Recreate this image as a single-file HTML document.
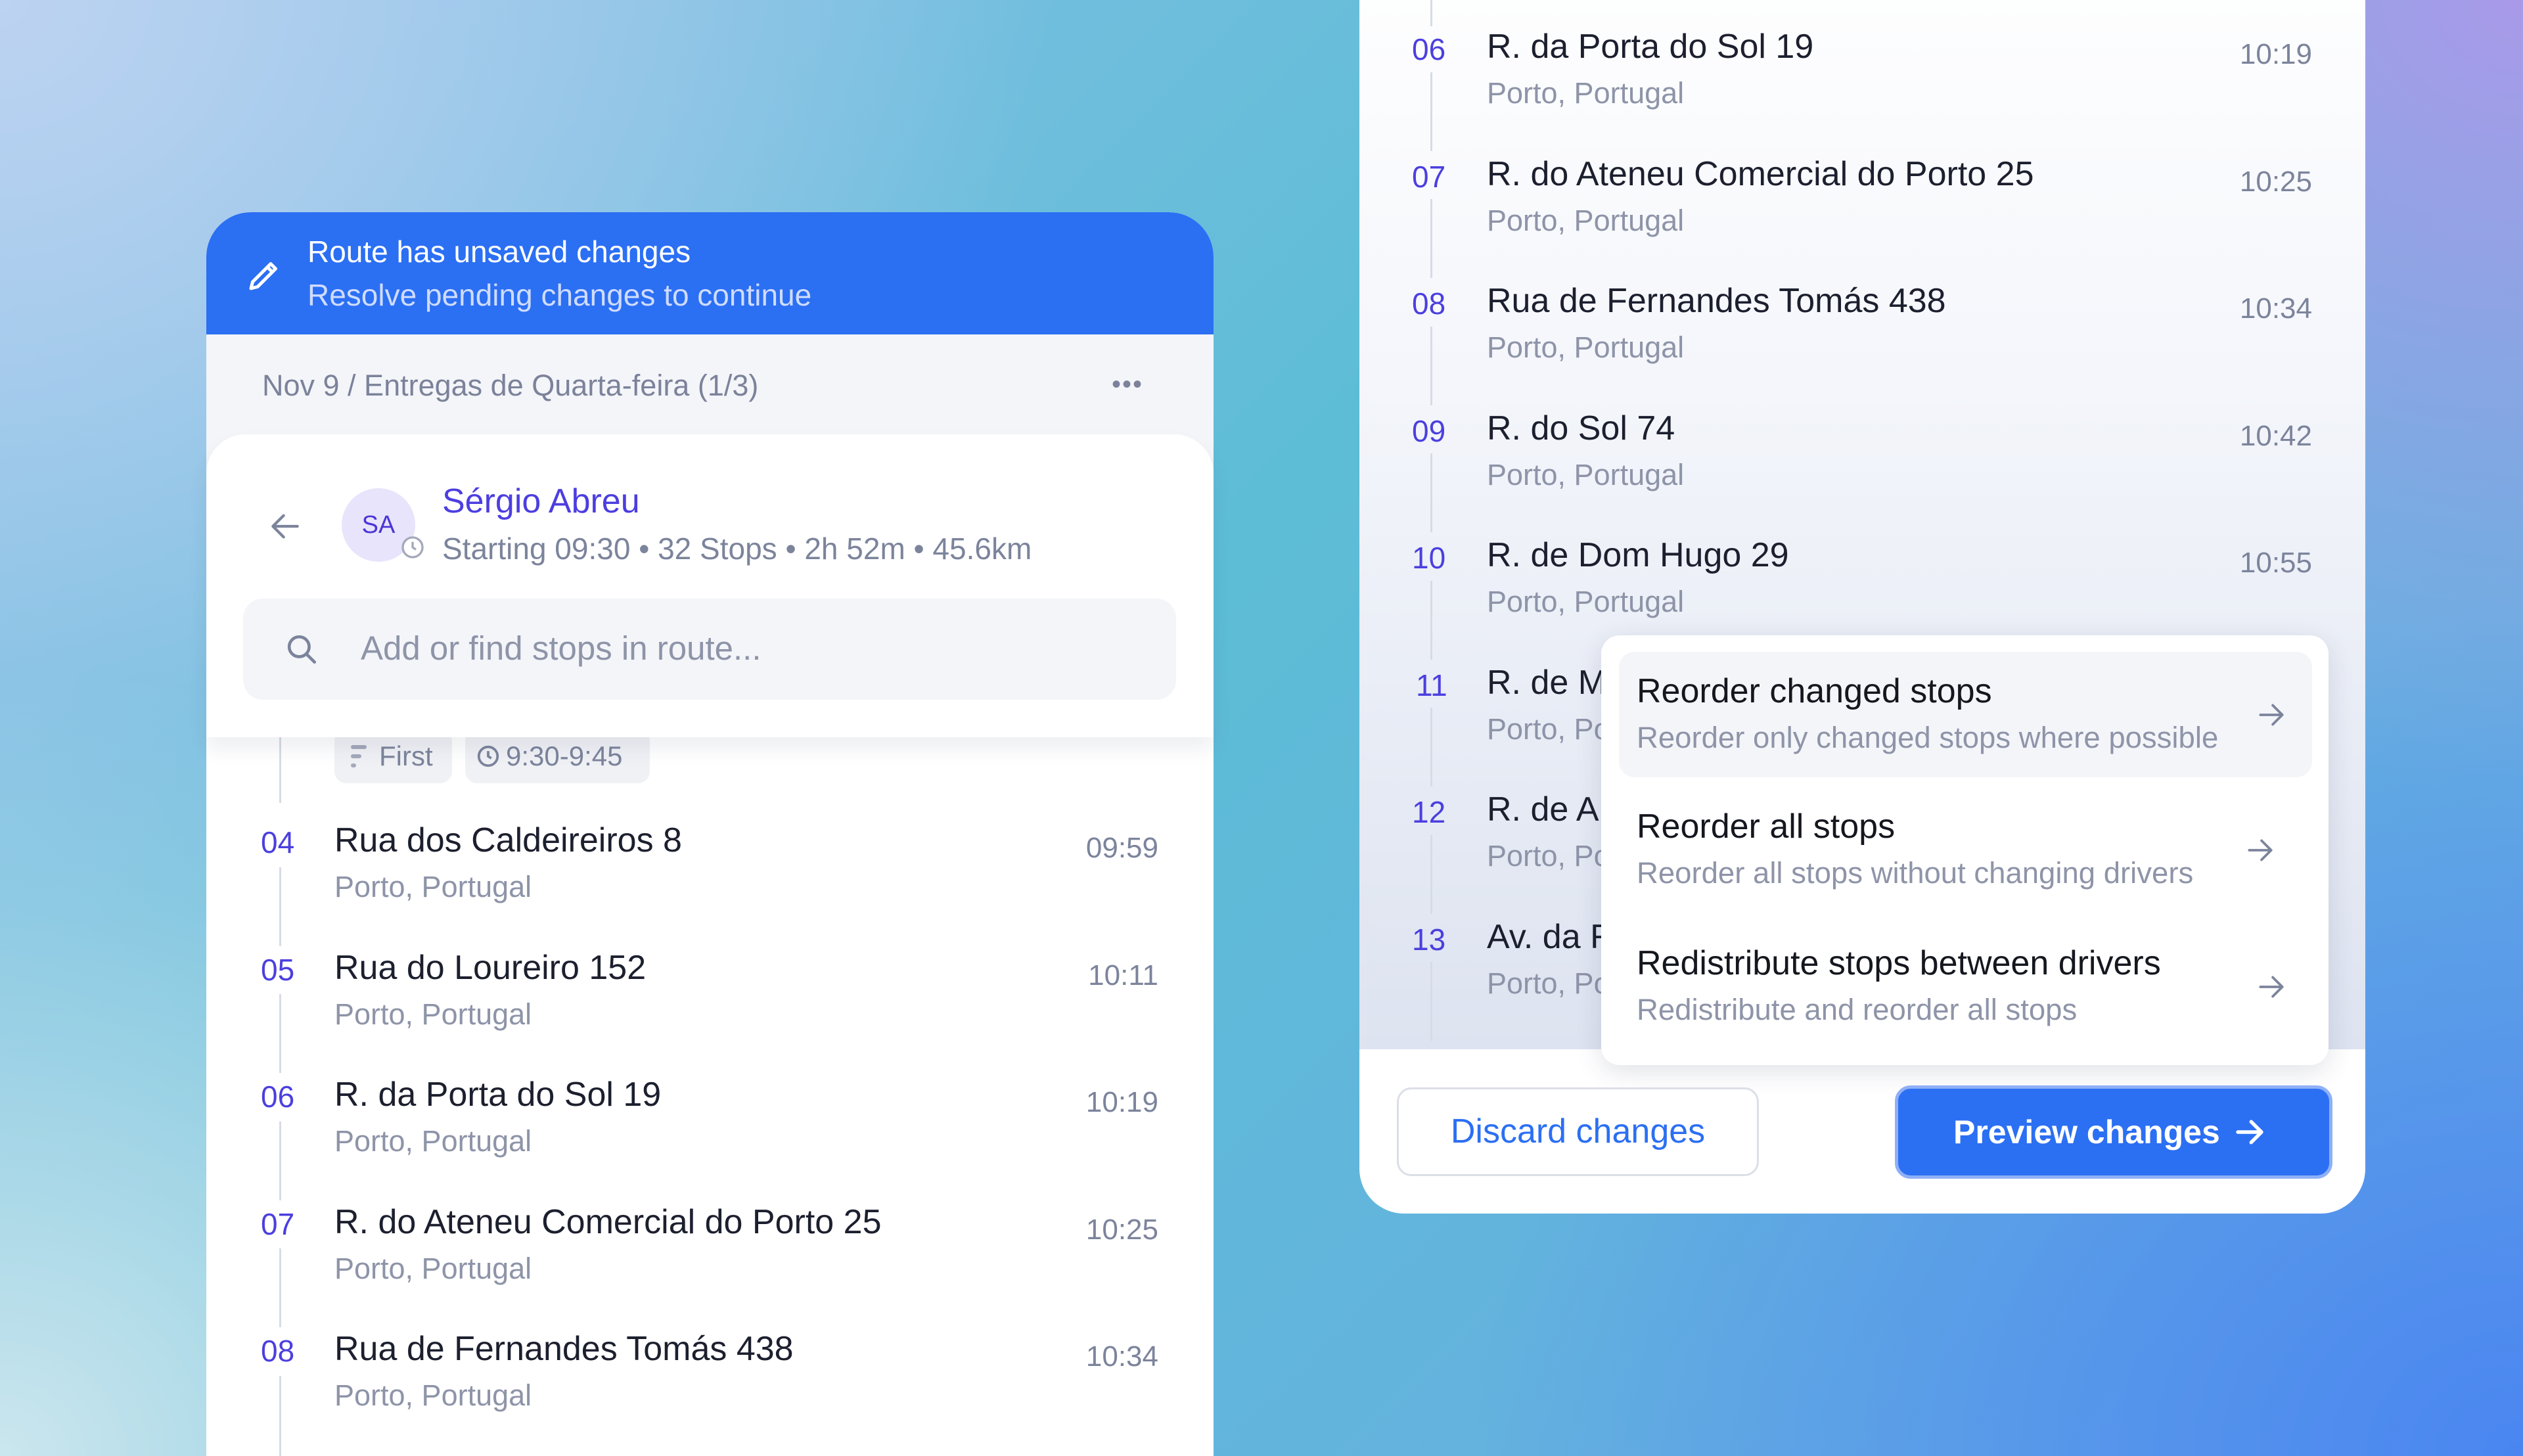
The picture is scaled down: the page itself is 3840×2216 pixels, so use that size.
<!DOCTYPE html>
<html style="overflow:hidden;width:3840px;height:2216px"><head><meta charset="utf-8"><style>
*{margin:0;padding:0;box-sizing:border-box}
body{width:3840px;height:2216px;overflow:hidden;position:relative;font-family:"Liberation Sans",sans-serif;
background:
radial-gradient(ellipse 1500px 1200px at 3840px 0px,#a99ae9 0%,rgba(169,154,233,0) 100%),
radial-gradient(ellipse 1600px 1300px at 3840px 2216px,#4a86f0 0%,rgba(74,134,240,0) 100%),
radial-gradient(ellipse 1600px 1400px at 0px 0px,#bcd3f1 0%,rgba(188,211,241,0) 100%),
radial-gradient(ellipse 1400px 1200px at 0px 2216px,#cbe6ee 0%,rgba(203,230,238,0) 100%),
linear-gradient(135deg,#8dbfe8 0%,#5dbdd6 45%,#6aa8e6 100%);}
.a{position:absolute;white-space:nowrap}
.num{color:#4b3fdf;font-size:46px}
.tt{color:#1c1f2e;font-size:52px}
.sub{color:#8e94a8;font-size:45px}
.tm{color:#7c849c;font-size:44px;text-align:right}
.vl{position:absolute;width:3px;background:#d8dbe5}
</style></head><body>

<!-- LEFT PANEL -->
<div class="a" style="left:314px;top:323px;width:1533px;height:1893px;background:#fff;border-radius:68px 68px 0 0;overflow:hidden">
  <div class="a" style="left:0;top:0;width:1533px;height:186px;background:#2b6ff3"></div>
  <svg class="a" style="left:58px;top:66px" width="60" height="60" viewBox="0 0 24 24" fill="none" stroke="#fff" stroke-width="2" stroke-linejoin="round"><path d="M4 20l1-4L16 5l3 3L8 19z M14 7l3 3"/></svg>
  <div class="a" style="left:154px;top:34px;font-size:46px;color:#fff;line-height:52px">Route has unsaved changes</div>
  <div class="a" style="left:154px;top:100px;font-size:46px;color:#cfdcff;line-height:52px">Resolve pending changes to continue</div>
  <div class="a" style="left:0;top:186px;width:1533px;height:300px;background:#f4f5f9"></div>
  <div class="a" style="left:85px;top:238px;font-size:45px;color:#7b829a;line-height:52px">Nov 9 / Entregas de Quarta-feira (1/3)</div>
  <div class="a" style="left:1378px;top:240px;font-size:40px;color:#7b829a;letter-spacing:2px">•••</div>
</div>
<!-- white card -->
<div class="a" style="left:314px;top:661px;width:1533px;height:461px;background:#fff;border-radius:60px 60px 0 0;box-shadow:0 18px 30px rgba(40,50,90,0.08);z-index:2">
  <svg class="a" style="left:92px;top:112px" width="56" height="56" viewBox="0 0 24 24" fill="none" stroke="#7c849c" stroke-width="1.8" stroke-linecap="round" stroke-linejoin="round"><path d="M20 12H5M11 5l-7 7 7 7"/></svg>
  <div class="a" style="left:206px;top:82px;width:112px;height:112px;border-radius:56px;background:#e7e4fb;color:#4b36d4;font-size:38px;line-height:112px;text-align:center">SA</div>
  <svg class="a" style="left:294px;top:152px" width="40" height="40" viewBox="0 0 24 24" fill="#fff" stroke="#a4a9bb" stroke-width="2"><circle cx="12" cy="12" r="9"/><path d="M12 7v5l3 2" fill="none"/></svg>
  <div class="a" style="left:359px;top:72px;font-size:52px;color:#4c3ee0;line-height:60px">Sérgio Abreu</div>
  <div class="a" style="left:359px;top:147px;font-size:46px;color:#7c849c;line-height:54px">Starting 09:30 • 32 Stops • 2h 52m • 45.6km</div>
  <div class="a" style="left:56px;top:250px;width:1420px;height:154px;background:#f4f5f9;border-radius:30px"></div>
  <svg class="a" style="left:118px;top:300px" width="56" height="56" viewBox="0 0 24 24" fill="none" stroke="#7c849c" stroke-width="2" stroke-linecap="round"><circle cx="10" cy="10" r="6.5"/><path d="M15 15l5 5"/></svg>
  <div class="a" style="left:235px;top:296px;font-size:51px;color:#8e94a8;line-height:60px">Add or find stops in route...</div>
</div>
<!-- chips -->
<div class="a" style="left:509px;top:1110px;width:179px;height:82px;background:#f0f1f5;border-radius:18px;font-size:42px;color:#7c849c;line-height:82px;padding-left:68px">First</div>
<div class="a" style="left:534px;top:1134px;width:24px;height:6px;background:#a4a9bb;border-radius:3px"></div>
<div class="a" style="left:534px;top:1148px;width:16px;height:6px;background:#a4a9bb;border-radius:3px"></div>
<div class="a" style="left:534px;top:1162px;width:8px;height:6px;background:#a4a9bb;border-radius:3px"></div>
<div class="a" style="left:708px;top:1110px;width:281px;height:82px;background:#f0f1f5;border-radius:18px;font-size:42px;color:#7c849c;line-height:82px;padding-left:62px">9:30-9:45</div>
<svg class="a" style="left:724px;top:1132px" width="38" height="38" viewBox="0 0 24 24" fill="none" stroke="#7c849c" stroke-width="2.4"><circle cx="12" cy="12" r="9"/><path d="M12 7v5l3 2"/></svg>

<div class="vl" style="left:425px;top:1122px;height:100px"></div>
<div class="vl" style="left:425px;top:1320px;height:120px"></div>
<div class="vl" style="left:425px;top:1513px;height:120px"></div>
<div class="vl" style="left:425px;top:1707px;height:120px"></div>
<div class="vl" style="left:425px;top:1900px;height:120px"></div>
<div class="vl" style="left:425px;top:2094px;height:122px"></div>

<div class="a num" style="left:397px;top:1255px">04</div><div class="a tt" style="left:509px;top:1249px">Rua dos Caldeireiros 8</div><div class="a sub" style="left:509px;top:1324px">Porto, Portugal</div><div class="a tm" style="right:2077px;top:1266px">09:59</div>
<div class="a num" style="left:397px;top:1449px">05</div><div class="a tt" style="left:509px;top:1443px">Rua do Loureiro 152</div><div class="a sub" style="left:509px;top:1518px">Porto, Portugal</div><div class="a tm" style="right:2077px;top:1460px">10:11</div>
<div class="a num" style="left:397px;top:1642px">06</div><div class="a tt" style="left:509px;top:1636px">R. da Porta do Sol 19</div><div class="a sub" style="left:509px;top:1711px">Porto, Portugal</div><div class="a tm" style="right:2077px;top:1653px">10:19</div>
<div class="a num" style="left:397px;top:1836px">07</div><div class="a tt" style="left:509px;top:1830px">R. do Ateneu Comercial do Porto 25</div><div class="a sub" style="left:509px;top:1905px">Porto, Portugal</div><div class="a tm" style="right:2077px;top:1847px">10:25</div>
<div class="a num" style="left:397px;top:2029px">08</div><div class="a tt" style="left:509px;top:2023px">Rua de Fernandes Tomás 438</div><div class="a sub" style="left:509px;top:2098px">Porto, Portugal</div><div class="a tm" style="right:2077px;top:2040px">10:34</div>

<!-- RIGHT PANEL -->
<div class="a" style="left:2069px;top:-100px;width:1531px;height:1947px;background:#fff;border-radius:0 0 68px 68px;overflow:hidden">
  <div class="a" style="left:0;top:0;width:1531px;height:1697px;background:linear-gradient(180deg,#fff 0%,#f4f6fb 40%,#dde3f0 100%)"></div>
</div>
<div class="vl" style="left:2177px;top:0;height:40px"></div>
<div class="vl" style="left:2177px;top:110px;height:120px"></div>
<div class="vl" style="left:2177px;top:303px;height:120px"></div>
<div class="vl" style="left:2177px;top:497px;height:120px"></div>
<div class="vl" style="left:2177px;top:690px;height:120px"></div>
<div class="vl" style="left:2177px;top:884px;height:120px"></div>
<div class="vl" style="left:2177px;top:1077px;height:120px"></div>
<div class="vl" style="left:2177px;top:1271px;height:120px"></div>
<div class="vl" style="left:2177px;top:1464px;height:120px"></div>

<div class="a num" style="left:2149px;top:48px">06</div><div class="a tt" style="left:2263px;top:41px">R. da Porta do Sol 19</div><div class="a sub" style="left:2263px;top:116px">Porto, Portugal</div><div class="a tm" style="right:321px;top:58px">10:19</div>
<div class="a num" style="left:2149px;top:242px">07</div><div class="a tt" style="left:2263px;top:235px">R. do Ateneu Comercial do Porto 25</div><div class="a sub" style="left:2263px;top:310px">Porto, Portugal</div><div class="a tm" style="right:321px;top:252px">10:25</div>
<div class="a num" style="left:2149px;top:435px">08</div><div class="a tt" style="left:2263px;top:428px">Rua de Fernandes Tomás 438</div><div class="a sub" style="left:2263px;top:503px">Porto, Portugal</div><div class="a tm" style="right:321px;top:445px">10:34</div>
<div class="a num" style="left:2149px;top:629px">09</div><div class="a tt" style="left:2263px;top:622px">R. do Sol 74</div><div class="a sub" style="left:2263px;top:697px">Porto, Portugal</div><div class="a tm" style="right:321px;top:639px">10:42</div>
<div class="a num" style="left:2149px;top:822px">10</div><div class="a tt" style="left:2263px;top:815px">R. de Dom Hugo 29</div><div class="a sub" style="left:2263px;top:890px">Porto, Portugal</div><div class="a tm" style="right:321px;top:832px">10:55</div>
<div class="a num" style="left:2155px;top:1016px">11</div><div class="a tt" style="left:2263px;top:1009px">R. de M</div><div class="a sub" style="left:2263px;top:1084px">Porto, Po</div>
<div class="a num" style="left:2149px;top:1209px">12</div><div class="a tt" style="left:2263px;top:1202px">R. de Ar</div><div class="a sub" style="left:2263px;top:1277px">Porto, Po</div>
<div class="a num" style="left:2149px;top:1403px">13</div><div class="a tt" style="left:2263px;top:1396px">Av. da R</div><div class="a sub" style="left:2263px;top:1471px">Porto, Po</div>

<!-- popup -->
<div class="a" style="left:2437px;top:967px;width:1107px;height:654px;background:#fff;border-radius:28px;box-shadow:0 10px 40px rgba(40,50,90,0.14)">
  <div class="a" style="left:27px;top:25px;width:1055px;height:191px;background:#f4f5f9;border-radius:24px"></div>
  <div class="a" style="left:54px;top:55px;font-size:52px;color:#15171f">Reorder changed stops</div>
  <div class="a" style="left:54px;top:130px;font-size:45.5px;color:#8e94a8">Reorder only changed stops where possible</div>
  <div class="a" style="left:54px;top:261px;font-size:52px;color:#15171f">Reorder all stops</div>
  <div class="a" style="left:54px;top:336px;font-size:45.5px;color:#8e94a8">Reorder all stops without changing drivers</div>
  <div class="a" style="left:54px;top:469px;font-size:52px;color:#15171f">Redistribute stops between drivers</div>
  <div class="a" style="left:54px;top:544px;font-size:45.5px;color:#8e94a8">Redistribute and reorder all stops</div>
  <svg class="a" style="left:995px;top:96px" width="50" height="50" viewBox="0 0 24 24" fill="none" stroke="#7c849c" stroke-width="1.8" stroke-linecap="round" stroke-linejoin="round"><path d="M4 12h15M13 5l7 7-7 7"/></svg>
  <svg class="a" style="left:978px;top:302px" width="50" height="50" viewBox="0 0 24 24" fill="none" stroke="#7c849c" stroke-width="1.8" stroke-linecap="round" stroke-linejoin="round"><path d="M4 12h15M13 5l7 7-7 7"/></svg>
  <svg class="a" style="left:995px;top:510px" width="50" height="50" viewBox="0 0 24 24" fill="none" stroke="#7c849c" stroke-width="1.8" stroke-linecap="round" stroke-linejoin="round"><path d="M4 12h15M13 5l7 7-7 7"/></svg>
</div>

<!-- buttons -->
<div class="a" style="left:2126px;top:1655px;width:551px;height:135px;border:3px solid #dcdfe8;border-radius:22px;background:#fff;color:#2b6ff3;font-size:52px;line-height:129px;text-align:center">Discard changes</div>
<div class="a" style="left:2884px;top:1652px;width:666px;height:142px;border:5px solid #8fb0f7;border-radius:24px;background:#2b6ff3;color:#fff;font-size:50px;font-weight:bold;line-height:132px;padding-left:84px">Preview changes</div>
<svg class="a" style="left:3397px;top:1696px" width="54" height="54" viewBox="0 0 24 24" fill="none" stroke="#fff" stroke-width="2.4" stroke-linecap="round" stroke-linejoin="round"><path d="M4 12h15M13 5l7 7-7 7"/></svg>
</body></html>
